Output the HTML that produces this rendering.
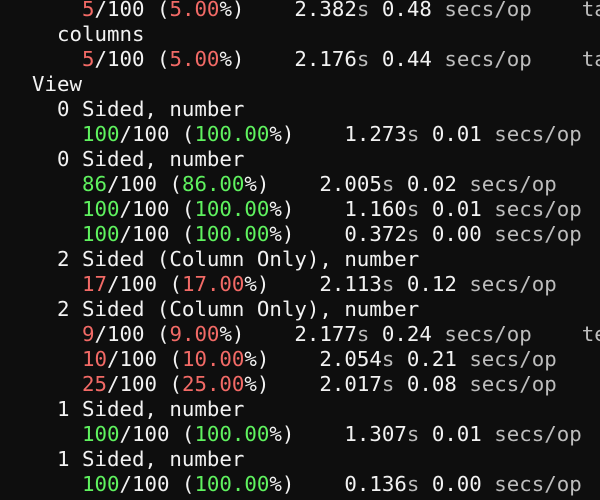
<!DOCTYPE html>
<html><head><style>
html,body{margin:0;padding:0;background:#0e0e0e;width:600px;height:500px;overflow:hidden}
pre{margin:0;position:absolute;left:32px;top:-3px;font-family:"DejaVu Sans Mono","Liberation Mono",monospace;font-size:20.76px;line-height:25px;color:#f2f2f2;white-space:pre}
.r{color:#f26a66}.g{color:#5ff25f}.d{color:#bdbdbd}
</style></head><body>
<pre>    <span class="r">5</span>/100 (<span class="r">5.00</span>%)    2.382<span class="d">s</span> 0.48 <span class="d">secs/op</span>    <span class="d">ta</span>
  columns
    <span class="r">5</span>/100 (<span class="r">5.00</span>%)    2.176<span class="d">s</span> 0.44 <span class="d">secs/op</span>    <span class="d">ta</span>
View
  0 Sided, number
    <span class="g">100</span>/100 (<span class="g">100.00</span>%)    1.273<span class="d">s</span> 0.01 <span class="d">secs/op</span>
  0 Sided, number
    <span class="g">86</span>/100 (<span class="g">86.00</span>%)    2.005<span class="d">s</span> 0.02 <span class="d">secs/op</span>
    <span class="g">100</span>/100 (<span class="g">100.00</span>%)    1.160<span class="d">s</span> 0.01 <span class="d">secs/op</span>
    <span class="g">100</span>/100 (<span class="g">100.00</span>%)    0.372<span class="d">s</span> 0.00 <span class="d">secs/op</span>
  2 Sided (Column Only), number
    <span class="r">17</span>/100 (<span class="r">17.00</span>%)    2.113<span class="d">s</span> 0.12 <span class="d">secs/op</span>
  2 Sided (Column Only), number
    <span class="r">9</span>/100 (<span class="r">9.00</span>%)    2.177<span class="d">s</span> 0.24 <span class="d">secs/op</span>    <span class="d">te</span>
    <span class="r">10</span>/100 (<span class="r">10.00</span>%)    2.054<span class="d">s</span> 0.21 <span class="d">secs/op</span>
    <span class="r">25</span>/100 (<span class="r">25.00</span>%)    2.017<span class="d">s</span> 0.08 <span class="d">secs/op</span>
  1 Sided, number
    <span class="g">100</span>/100 (<span class="g">100.00</span>%)    1.307<span class="d">s</span> 0.01 <span class="d">secs/op</span>
  1 Sided, number
    <span class="g">100</span>/100 (<span class="g">100.00</span>%)    0.136<span class="d">s</span> 0.00 <span class="d">secs/op</span>
</pre>
</body></html>
